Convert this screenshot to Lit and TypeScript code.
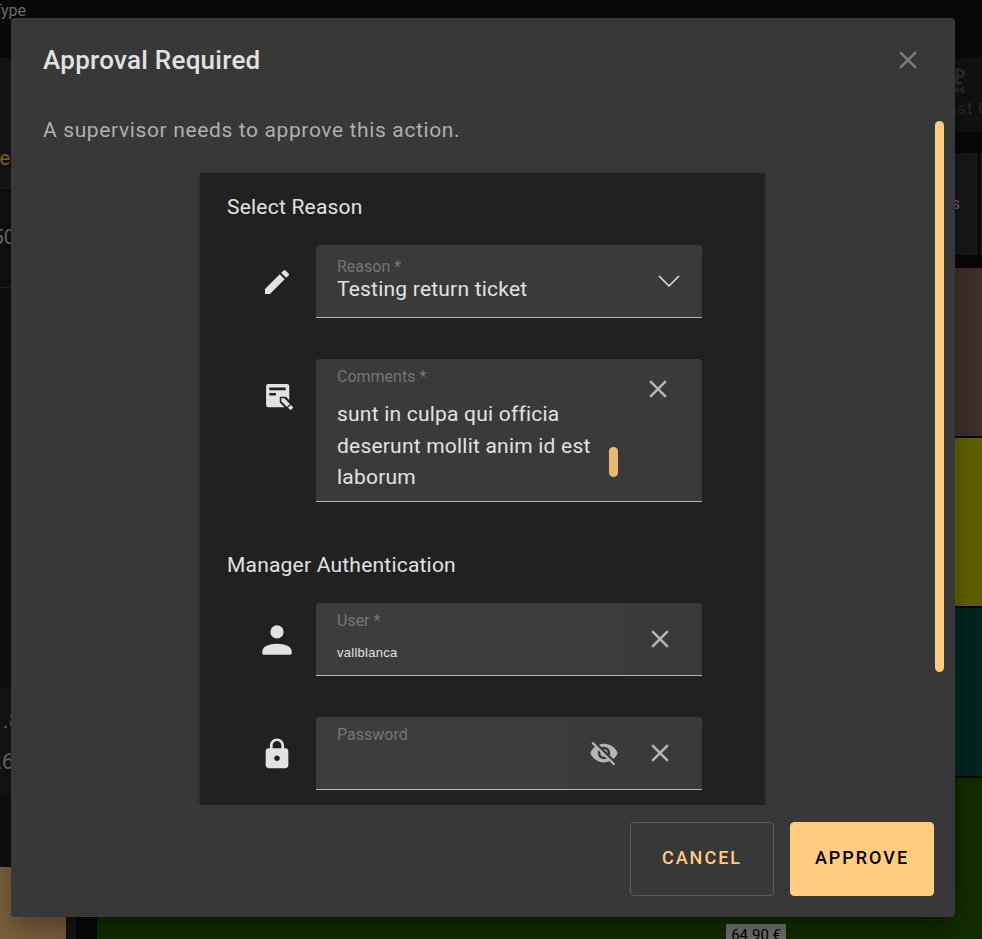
import { LitElement, html, css, svg } from "lit";
import { customElement, state } from "lit/decorators.js";

const icons = {
  close: svg`<path d="M19 6.41 17.59 5 12 10.59 6.41 5 5 6.41 10.59 12 5 17.59 6.41 19 12 13.41 17.59 19 19 17.59 13.41 12z"/>`,
  edit: svg`<path d="M3 17.25V21h3.75L17.81 9.94l-3.75-3.75L3 17.25zM20.71 7.04a1 1 0 0 0 0-1.41l-2.34-2.34a1 1 0 0 0-1.41 0l-1.83 1.83 3.75 3.75 1.83-1.83z"/>`,
  note: svg`<path fill-rule="evenodd" d="M5.500 3h14a1.700 1.700 0 0 1 1.700 1.700V15.200l-2.500-2.600h-4.600v4.200l3.500 3.700H5.500a1.700 1.700 0 0 1-1.700-1.700V4.700A1.700 1.700 0 0 1 5.500 3zM6.200 5.600v2h12.300v-2zM6.200 9.700v1.900h5V9.700z"/><path d="M15.200 13.700h2.300l4.200 4.300-2.200 2.200-4.300-4.300zM22.400 18.700l1.400 1.400a.7.7 0 0 1 0 1l-1.100 1.100a.7.7 0 0 1-1 0L20.200 20.900z"/>`,
  person: svg`<circle cx="12" cy="7.600" r="3.600"/><path d="M4 18.200c0-2.700 3.600-4.200 8-4.200s8 1.500 8 4.200V19.200c0 .500-.300.800-.800.800H4.800c-.500 0-.800-.300-.800-.800z"/>`,
  lock: svg`<path d="M18 8h-1V6c0-2.760-2.240-5-5-5S7 3.240 7 6v2H6c-1.100 0-2 .9-2 2v10c0 1.100.9 2 2 2h12c1.100 0 2-.9 2-2V10c0-1.100-.9-2-2-2zm-6 9c-1.100 0-2-.9-2-2s.9-2 2-2 2 .9 2 2-.9 2-2 2zm3.100-9H8.900V6c0-1.710 1.390-3.100 3.100-3.100s3.100 1.390 3.100 3.100v2z"/>`,
  eyeOff: svg`<path d="M12 7c2.760 0 5 2.240 5 5 0 .650-.130 1.260-.360 1.830l2.920 2.920c1.510-1.260 2.700-2.890 3.430-4.750-1.730-4.390-6-7.500-11-7.500-1.400 0-2.740.250-3.980.700l2.160 2.160C10.740 7.130 11.350 7 12 7zM2 4.270l2.280 2.280.460.460A11.800 11.800 0 0 0 1 12c1.730 4.390 6 7.500 11 7.500 1.550 0 3.030-.300 4.380-.840l.420.420L19.730 22 21 20.730 3.270 3 2 4.270zM7.530 9.800l1.550 1.550c-.050.210-.080.430-.080.650 0 1.660 1.340 3 3 3 .220 0 .440-.030.650-.080l1.550 1.550c-.670.330-1.410.530-2.200.530-2.760 0-5-2.240-5-5 0-.790.200-1.530.530-2.200zm4.310-.780 3.150 3.150.020-.160c0-1.660-1.340-3-3-3l-.170.010z"/>`,
};

const icon = (name: keyof typeof icons, cls = "") =>
  html`<svg class="icon ${cls}" viewBox="0 0 24 24" aria-hidden="true">${icons[name]}</svg>`;

/** The point-of-sale screen that stays dimmed under the dialog. */
@customElement("pos-backdrop")
export class PosBackdrop extends LitElement {
  static styles = css`
    :host {
      display: grid;
      grid-template-rows: 58px 1fr;
      height: 100%;
      overflow: hidden;
      background: #080808;
      color: #6f6f6f;
      font-family: Roboto, sans-serif;
    }
    .top { background: #0a0a0a; }
    .clip {
      display: flex;
      justify-content: flex-end;
      overflow: hidden;
      white-space: nowrap;
    }
    .type { width: 26px; font-size: 16px; line-height: 22px; }
    .main {
      display: grid;
      grid-template-columns: 76px 1fr;
      column-gap: 21px;
      min-height: 0;
    }
    .ticket { display: flex; flex-direction: column; background: #111; }
    .ticket > div { box-sizing: border-box; flex: none; }
    .tabs { height: 130px; padding-top: 86px; background: #181818; }
    .tabs .clip { width: 10px; color: #8a6b42; font-size: 20px; line-height: 28px; }
    .line { height: 100px; padding-top: 34px; border: solid #262626; border-width: 1px 0; background: #111313; }
    .line .clip { width: 15px; font-size: 20px; line-height: 28px; }
    .totals { height: 105px; margin-top: 400px; padding-top: 15px; background: #171717; }
    .totals .clip { width: 21px; font-size: 22px; line-height: 36px; }
    .totals .clip + .clip { width: 14px; line-height: 46px; }
    .pay { height: 120px; margin-top: 74px; border-right: 10px solid #171717; background: #806440; }
    .catalog { display: flex; flex-direction: column; min-width: 0; }
    .catalog > div { flex: none; box-sizing: border-box; }
    .tools {
      display: flex;
      flex-direction: column;
      align-items: flex-end;
      height: 74px;
      padding-top: 9px;
      background: #121212;
      color: #2e2e2e;
    }
    .tools svg { width: 28px; height: 30px; margin-right: 11px; fill: none; stroke: #2e2e2e; stroke-width: 3; }
    .tools .clip { width: 34px; justify-content: flex-start; font-size: 16px; line-height: 24px; letter-spacing: 1px; }
    .cats { display: flex; justify-content: flex-end; gap: 2px; height: 102px; margin: 21px 0 13px; }
    .cat { flex: 1; padding: 41px 18px 0 0; background: #17181a; font-size: 16px; line-height: 20px; text-align: right; }
    .cat.next { flex: none; width: 2px; padding: 0; }
    .tile { height: 168px; margin-bottom: 2px; }
    .brown { background: #3f312d; }
    .olive { background: #646400; }
    .teal { background: #002720; }
    .green { display: flex; justify-content: flex-end; padding: 146px 196px 0 0; background: #132e00; }
    .price { padding: 0 5px; background: #777; color: #000; font-size: 15px; line-height: 22px; }
  `;

  render() {
    return html`
      <div class="top"><div class="clip type">Type</div></div>
      <div class="main">
        <div class="ticket">
          <div class="tabs"><div class="clip">e</div></div>
          <div class="line"><div class="clip">50</div></div>
          <div class="totals"><div class="clip">.8</div><div class="clip">26</div></div>
          <div class="pay"></div>
        </div>
        <div class="catalog">
          <div class="tools">
            <svg viewBox="0 0 28 30" aria-hidden="true">
              <path d="M9 3v12M14 16V3h3a3 3 0 0 1 0 7h-3M5 16h14" />
              <path fill="#2e2e2e" stroke="none" d="M15 19v8l-5-4zM21 19v8l-6-4z" />
            </svg>
            <div class="clip">ast Op</div>
          </div>
          <div class="cats"><div class="cat">s</div><div class="cat next"></div></div>
          <div class="tile brown"></div>
          <div class="tile olive"></div>
          <div class="tile teal"></div>
          <div class="tile green"><span class="price">64.90 €</span></div>
        </div>
      </div>
    `;
  }
}

@customElement("app-root")
export class AppRoot extends LitElement {
  @state() private comments = "sunt in culpa qui officia deserunt mollit anim id est laborum";
  @state() private user = "vallblanca";
  @state() private password = "";
  @state() private showPassword = false;

  static styles = css`
    :host {
      display: block;
      position: relative;
      height: 100vh;
      overflow: hidden;
      background: #080808;
      font-family: Roboto, sans-serif;
    }
    * { box-sizing: border-box; }
    .overlay {
      position: absolute;
      inset: 0;
      display: flex;
      padding: 18px 27px 22px 11px;
    }
    .dialog {
      display: flex;
      flex-direction: column;
      flex: 1;
      min-width: 0;
      border-radius: 4px;
      background: #383838;
      color: #e2e2e2;
      box-shadow: 0 11px 15px -7px rgba(0, 0, 0, 0.2), 0 24px 38px 3px rgba(0, 0, 0, 0.14),
        0 9px 46px 8px rgba(0, 0, 0, 0.12);
    }
    header {
      display: flex;
      align-items: center;
      justify-content: space-between;
      flex: none;
      height: 85px;
      padding: 0 32px 2px;
    }
    h1 { margin: 0; font-size: 26px; font-weight: 500; line-height: 32px; letter-spacing: 0.01em; }
    button { font-family: inherit; cursor: pointer; }
    .icon { display: block; width: 34px; height: 34px; fill: currentColor; overflow: visible; }
    .lead .small { width: 32px; height: 32px; }
    .icon-button {
      display: flex;
      align-items: center;
      justify-content: center;
      flex: none;
      width: 56px;
      height: 56px;
      padding: 0;
      border: 0;
      background: none;
      color: #b5b5b5;
    }
    .icon-button .icon { width: 30px; height: 30px; }
    .dismiss { width: 30px; height: 30px; color: #7d7d7d; }
    .body { position: relative; flex: 1; min-height: 0; }
    .scroller {
      height: 100%;
      padding: 12px 33px 0 32px;
      overflow-y: auto;
      scrollbar-width: none;
    }
    .track { position: absolute; inset: 18px 11px 0 auto; width: 9px; pointer-events: none; }
    .thumb { height: 551px; max-height: 81%; border-radius: 5px; background: #ffcc80; }
    .intro { margin: 0 0 28px; color: #afafaf; font-size: 21px; line-height: 30px; letter-spacing: 0.03em; }
    .card {
      width: 565px;
      max-width: 100%;
      margin: 0 auto;
      padding: 20px 63px 41px 27px;
      background: #212121;
      box-shadow: 0 2px 4px rgba(0, 0, 0, 0.3);
    }
    h2 { margin: 0 0 24px; font-size: 21px; font-weight: 400; line-height: 28px; }
    section + section { margin-top: 49px; }
    .row { display: flex; }
    .row + .row { margin-top: 41px; }
    .lead {
      display: flex;
      align-items: center;
      justify-content: center;
      flex: none;
      width: 89px;
      height: 73px;
      padding-left: 11px;
    }
    .lead .person { width: 44px; height: 44px; }
    .field {
      position: relative;
      display: flex;
      align-items: center;
      flex: 1;
      min-width: 0;
      height: 73px;
      overflow: hidden;
      border-bottom: 1px solid #b5b5b5;
      border-radius: 4px 4px 0 0;
      background: #3a3a3a;
    }
    .field.tall { align-items: flex-start; height: 143px; }
    .field label {
      position: absolute;
      top: 8px;
      left: 21px;
      color: #757575;
      font-size: 16px;
      line-height: 20px;
    }
    .field.picker label { top: 12px; }
    .field.picker svg.chevron {
      position: absolute;
      top: 30px;
      right: 22px;
      width: 22px;
      height: 13px;
      fill: none;
      stroke: #e2e2e2;
      stroke-width: 1.5;
      pointer-events: none;
    }
    select, input, textarea {
      flex: 1;
      min-width: 0;
      margin: 0;
      border: 0;
      border-radius: 0;
      outline: 0;
      background: transparent;
      color: #e2e2e2;
    }
    select {
      height: 72px;
      padding: 16px 56px 0 21px;
      appearance: none;
      font: 400 21px/28px Roboto, sans-serif;
    }
    input {
      height: 72px;
      padding: 26px 0 0 21px;
      background: #3d3d3d;
      font: 400 13px/20px "Liberation Sans", Arial, sans-serif;
      letter-spacing: 0.02em;
    }
    textarea {
      height: 98px;
      margin-top: 40px;
      padding: 0 14px 0 21px;
      resize: none;
      overflow-y: auto;
      scrollbar-width: none;
      font: 400 21px/1.5 Roboto, sans-serif;
    }
    .spaced { letter-spacing: 0.01em; }
    .mini { flex: none; width: 9px; height: 30px; margin-top: 88px; border-radius: 5px; background: #e8ba75; }
    .suffix { display: flex; flex: none; padding: 0 14px 0 8px; }
    .tall .suffix { padding: 2px 16px 0 12px; }
    footer {
      display: flex;
      justify-content: flex-end;
      flex: none;
      gap: 16px;
      padding: 17px 21px 21px;
    }
    .action {
      width: 144px;
      height: 74px;
      padding: 0 0 4px;
      border: 1px solid #5c5c5c;
      border-radius: 4px;
      background: transparent;
      color: #ffcc80;
      font-size: 18px;
      font-weight: 500;
      letter-spacing: 2px;
    }
    .primary { border-color: #ffcc80; background: #ffcc80; color: #000; }
  `;

  render() {
    return html`
      <pos-backdrop aria-hidden="true"></pos-backdrop>
      <div class="overlay">
        <div class="dialog" role="dialog" aria-modal="true" aria-labelledby="title">
          <header>
            <h1 id="title">Approval Required</h1>
            <button class="icon-button dismiss" aria-label="Close">${icon("close")}</button>
          </header>
          <div class="body">
            <div class="scroller">
              <p class="intro">A supervisor needs to approve this action.</p>
              <form class="card">
                <section>
                  <h2 class="spaced">Select Reason</h2>
                  <div class="row">
                    <div class="lead">${icon("edit", "small")}</div>
                    <div class="field picker">
                      <label for="reason">Reason *</label>
                      <select id="reason" class="spaced"><option>Testing return ticket</option></select>
                      <svg class="chevron" viewBox="0 0 22 13" aria-hidden="true"><path d="M1 1l10 10L21 1" /></svg>
                    </div>
                  </div>
                  <div class="row">
                    <div class="lead">${icon("note", "small")}</div>
                    <div class="field tall">
                      <label for="comments">Comments *</label>
                      <textarea id="comments" class="spaced" .value=${this.comments}
                        @input=${(e: Event) => (this.comments = (e.target as HTMLTextAreaElement).value)}></textarea>
                      <div class="mini"></div>
                      <div class="suffix">
                        <button type="button" class="icon-button" aria-label="Clear comments"
                          @click=${() => (this.comments = "")}>${icon("close")}</button>
                      </div>
                    </div>
                  </div>
                </section>
                <section>
                  <h2 class="spaced">Manager Authentication</h2>
                  <div class="row">
                    <div class="lead">${icon("person", "person")}</div>
                    <div class="field">
                      <input id="user" autocomplete="username" .value=${this.user}
                        @input=${(e: Event) => (this.user = (e.target as HTMLInputElement).value)} />
                      <label for="user">User *</label>
                      <div class="suffix">
                        <button type="button" class="icon-button" aria-label="Clear user"
                          @click=${() => (this.user = "")}>${icon("close")}</button>
                      </div>
                    </div>
                  </div>
                  <div class="row">
                    <div class="lead">${icon("lock")}</div>
                    <div class="field">
                      <input id="password" type=${this.showPassword ? "text" : "password"}
                        autocomplete="current-password" .value=${this.password}
                        @input=${(e: Event) => (this.password = (e.target as HTMLInputElement).value)} />
                      <label for="password">Password</label>
                      <div class="suffix">
                        <button type="button" class="icon-button" aria-label="Show password"
                          @click=${() => (this.showPassword = !this.showPassword)}>${icon("eyeOff")}</button>
                        <button type="button" class="icon-button" aria-label="Clear password"
                          @click=${() => (this.password = "")}>${icon("close")}</button>
                      </div>
                    </div>
                  </div>
                </section>
              </form>
            </div>
            <div class="track"><div class="thumb"></div></div>
          </div>
          <footer>
            <button class="action">CANCEL</button>
            <button class="action primary">APPROVE</button>
          </footer>
        </div>
      </div>
    `;
  }
}
